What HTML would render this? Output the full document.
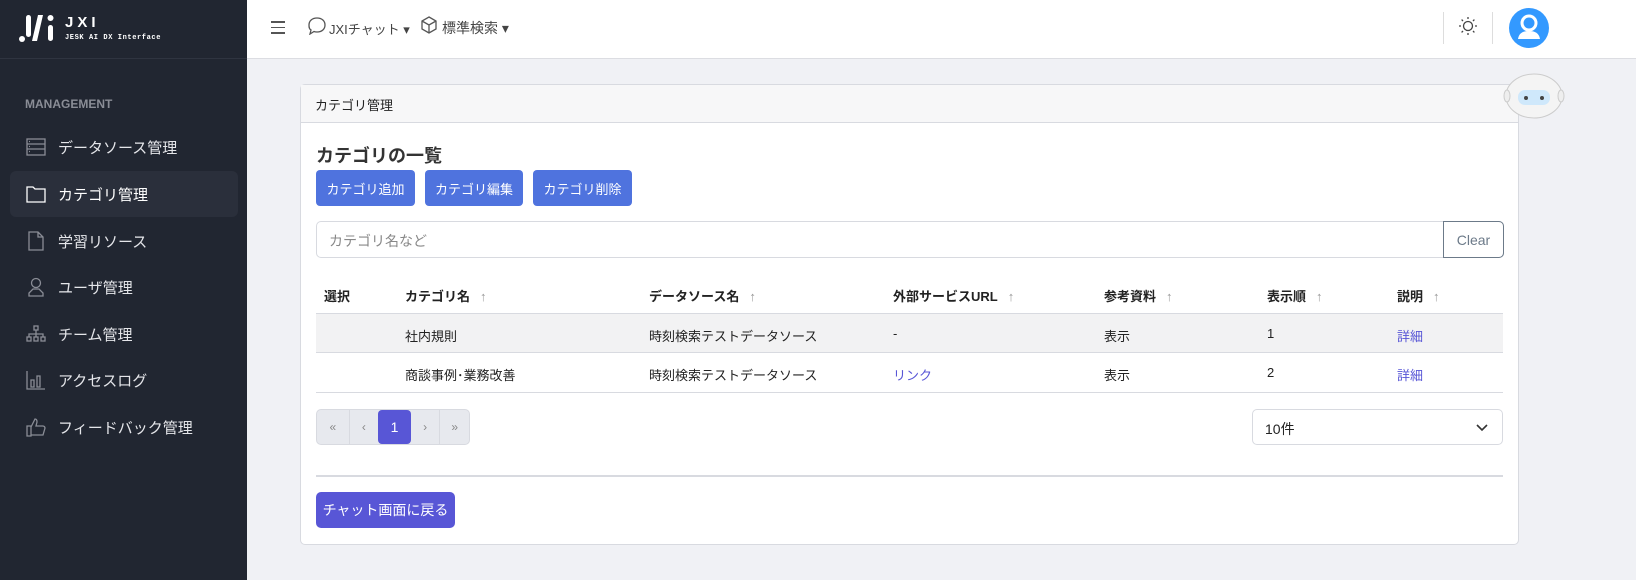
<!DOCTYPE html><html><head><meta charset="utf-8"><style>
*{box-sizing:border-box;margin:0;padding:0}
body{width:1636px;height:580px;overflow:hidden;background:#f0f1f5;font-family:"Liberation Sans","Noto Sans CJK JP",sans-serif;font-size:14px;color:#222;position:relative}
.sb{position:absolute;left:0;top:0;width:247px;height:580px;background:#212631;color:#e5e6ea}
.logo{height:59px;border-bottom:1px solid #2f3440;position:relative}
.nav{position:absolute;left:10px;width:228px;height:46px;display:flex;align-items:center;padding-left:16px;font-size:15px}
.nav svg{margin-right:12px}
.hd{position:absolute;left:247px;top:0;right:0;height:59px;background:#fff;border-bottom:1px solid #dcdde2}
.card{position:absolute;left:300px;top:84px;width:1219px;height:461px;background:#fff;border:1px solid #d8dae0;border-radius:5px}
.ch{height:38px;background:#f7f7f8;border-bottom:1px solid #d8dae0;padding:10px 14px;font-size:13px}
.abs{position:absolute}
.btn{position:absolute;top:170px;height:36px;background:#4f73de;color:#fff;border-radius:4px;font-size:13px;display:flex;align-items:center;justify-content:center}
.th{position:absolute;top:286px;font-weight:bold;font-size:13px}
.th i{font-style:normal;font-weight:normal;color:#999;margin-left:10px}
.td{position:absolute;font-size:13px}
a{color:#5856d6}
</style></head><body>
<div class="sb">
<div class="logo">
<svg class="abs" style="left:18px;top:13px" width="42" height="30" viewBox="0 0 42 30"><g fill="#fff"><rect x="8" y="2" width="5" height="22" rx="2.5"/><circle cx="4" cy="26" r="3"/><path d="M20 2 l5 0 l-6 26 l-5 0z"/><rect x="30" y="12" width="5" height="16" rx="2.5"/><circle cx="32.5" cy="5" r="3"/></g></svg>
<div class="abs" style="left:65px;top:14px;font-size:15px;font-weight:bold;letter-spacing:4px;color:#fff">JXI</div>
<div class="abs" style="left:65px;top:34px;font-size:7px;font-weight:bold;letter-spacing:.6px;color:#fff;font-family:'Liberation Mono',monospace">JESK AI DX Interface</div>
</div>
<div class="abs" style="left:25px;top:97px;font-size:12px;font-weight:bold;color:#8a8d96">MANAGEMENT</div>
<div class="nav" style="top:124px"><svg width="20" height="18" viewBox="0 0 20 18" fill="none" stroke="#8a8d96" stroke-width="1.3"><rect x="1" y="1" width="18" height="16"/><path d="M1 6h18M1 11h18M3 3.5h1M3 8.5h1M3 13.5h1"/></svg>データソース管理</div>
<div class="nav" style="top:171px;background:#2a2f3b;border-radius:6px;color:#fff"><svg width="20" height="18" viewBox="0 0 20 18" fill="none" stroke="#fff" stroke-width="1.3"><path d="M1 2h6l2 2h10v13H1z"/></svg>カテゴリ管理</div>
<div class="nav" style="top:218px"><svg width="20" height="20" viewBox="0 0 20 20" fill="none" stroke="#8a8d96" stroke-width="1.3"><path d="M3 1h9l5 5v13H3zM12 1v5h5"/></svg>学習リソース</div>
<div class="nav" style="top:264px"><svg width="20" height="20" viewBox="0 0 20 20" fill="none" stroke="#8a8d96" stroke-width="1.3"><circle cx="10" cy="6" r="4.5"/><path d="M3 19v-3l4-4h6l4 4v3z"/></svg>ユーザ管理</div>
<div class="nav" style="top:311px"><svg width="20" height="18" viewBox="0 0 20 18" fill="none" stroke="#8a8d96" stroke-width="1.3"><rect x="8" y="1" width="4" height="4"/><rect x="1" y="12" width="4" height="4"/><rect x="8" y="12" width="4" height="4"/><rect x="15" y="12" width="4" height="4"/><path d="M10 5v7M3 12V9h14v3"/></svg>チーム管理</div>
<div class="nav" style="top:357px"><svg width="20" height="20" viewBox="0 0 20 20" fill="none" stroke="#8a8d96" stroke-width="1.3"><path d="M1 1v18h18M5 10h3v7H5zM11 6h3v11h-3z"/></svg>アクセスログ</div>
<div class="nav" style="top:404px"><svg width="20" height="20" viewBox="0 0 20 20" fill="none" stroke="#8a8d96" stroke-width="1.3"><path d="M1 9h4v10H1zM5 10l4-8c2 0 2 2 2 3l-1 4h7c1 0 2 1 2 2l-2 7H5"/></svg>フィードバック管理</div>
</div>
<div class="hd">
<div class="abs" style="left:24px;top:21px;width:14px"><div style="height:1.5px;background:#555;margin-bottom:4px"></div><div style="height:1.5px;background:#555;margin-bottom:4px"></div><div style="height:1.5px;background:#555"></div></div>
<svg class="abs" style="left:60px;top:17px" width="20" height="18" viewBox="0 0 20 18" fill="none" stroke="#555" stroke-width="1.3"><path d="M10 1c5 0 8 3 8 7s-3 7-8 7c-1 0-2 0-3-.5L3 17l1-4C2 12 2 10 2 8c0-4 3-7 8-7z"/></svg>
<div class="abs" style="left:82px;top:19px;color:#444;font-size:13px">JXIチャット ▾</div>
<svg class="abs" style="left:173px;top:16px" width="18" height="18" viewBox="0 0 18 18" fill="none" stroke="#555" stroke-width="1.3"><path d="M9 1l7 4v8l-7 4-7-4V5zM2 5l7 4 7-4M9 9v8"/></svg>
<div class="abs" style="left:195px;top:18px;color:#444;font-size:14px">標準検索 ▾</div>
<div class="abs" style="left:1196px;top:12px;width:1px;height:32px;background:#ddd"></div>
<svg class="abs" style="left:1211px;top:16px" width="20" height="20" viewBox="0 0 20 20" fill="none" stroke="#444" stroke-width="1.3"><circle cx="10" cy="10" r="4.5"/><path d="M10 1v2M10 17v2M1 10h2M17 10h2M3.6 3.6l1.4 1.4M15 15l1.4 1.4M3.6 16.4L5 15M15 5l1.4-1.4"/></svg>
<div class="abs" style="left:1245px;top:12px;width:1px;height:32px;background:#ddd"></div>
<svg class="abs" style="left:1262px;top:8px" width="40" height="40" viewBox="0 0 40 40"><circle cx="20" cy="20" r="20" fill="#3399ff"/><circle cx="20" cy="15" r="7" fill="none" stroke="#fff" stroke-width="3"/><path d="M9 31c1-6 5-8 11-8s10 2 11 8z" fill="#fff"/></svg>
</div>
<div class="card"><div class="ch">カテゴリ管理</div></div>
<svg class="abs" style="left:1503px;top:72px" width="62" height="48" viewBox="0 0 62 48"><ellipse cx="31" cy="24" rx="28" ry="22" fill="#f4f4f4" stroke="#ccc"/><ellipse cx="4" cy="24" rx="3" ry="6" fill="#eee" stroke="#ccc"/><ellipse cx="58" cy="24" rx="3" ry="6" fill="#eee" stroke="#ccc"/><rect x="15" y="18" width="32" height="15" rx="7" fill="#cfe8fb"/><circle cx="23" cy="26" r="2" fill="#444"/><circle cx="39" cy="26" r="2" fill="#444"/></svg>
<div class="abs" style="left:316px;top:142px;font-size:18px;font-weight:bold;color:#333">カテゴリの一覧</div>
<div class="btn" style="left:316px;width:99px">カテゴリ追加</div>
<div class="btn" style="left:425px;width:98px">カテゴリ編集</div>
<div class="btn" style="left:533px;width:99px">カテゴリ削除</div>
<div class="abs" style="left:316px;top:221px;width:1188px;height:37px;border:1px solid #d8dae0;border-radius:5px;padding:9px 12px;color:#888">カテゴリ名など</div>
<div class="abs" style="left:1443px;top:221px;width:61px;height:37px;border:1px solid #6c7a89;border-radius:0 5px 5px 0;color:#6c7a89;text-align:center;padding-top:10px">Clear</div>
<div class="th" style="left:324px">選択</div>
<div class="th" style="left:405px">カテゴリ名<i>↑</i></div>
<div class="th" style="left:649px">データソース名<i>↑</i></div>
<div class="th" style="left:893px">外部サービスURL<i>↑</i></div>
<div class="th" style="left:1104px">参考資料<i>↑</i></div>
<div class="th" style="left:1267px">表示順<i>↑</i></div>
<div class="th" style="left:1397px">説明<i>↑</i></div>
<div class="abs" style="left:316px;top:313px;width:1187px;height:40px;background:#f2f2f3;border-top:1px solid #d8dae0;border-bottom:1px solid #d8dae0"></div>
<div class="abs" style="left:316px;top:392px;width:1187px;height:1px;background:#d8dae0"></div>
<div class="td" style="left:405px;top:326px">社内規則</div><div class="td" style="left:649px;top:326px">時刻検索テストデータソース</div><div class="td" style="left:893px;top:326px">-</div><div class="td" style="left:1104px;top:326px">表示</div><div class="td" style="left:1267px;top:326px">1</div><div class="td" style="left:1397px;top:326px"><a>詳細</a></div>
<div class="td" style="left:405px;top:365px">商談事例･業務改善</div><div class="td" style="left:649px;top:365px">時刻検索テストデータソース</div><div class="td" style="left:893px;top:365px"><a>リンク</a></div><div class="td" style="left:1104px;top:365px">表示</div><div class="td" style="left:1267px;top:365px">2</div><div class="td" style="left:1397px;top:365px"><a>詳細</a></div>
<div class="abs" style="left:316px;top:409px;width:154px;height:36px;background:#e7e9ee;border:1px solid #d8dae0;border-radius:5px;display:flex;color:#888;font-size:12px;line-height:34px;text-align:center">
<div style="width:33px;border-right:1px solid #d8dae0">«</div><div style="width:29px">‹</div><div style="width:33px;background:#5856d6;color:#fff;border-radius:4px;font-size:14px">1</div><div style="width:30px;border-right:1px solid #d8dae0">›</div><div style="width:29px">»</div></div>
<div class="abs" style="left:1252px;top:409px;width:251px;height:36px;border:1px solid #d8dae0;border-radius:5px;padding:9px 12px">10件<svg style="position:absolute;right:14px;top:14px" width="12" height="8" viewBox="0 0 12 8" fill="none" stroke="#333" stroke-width="1.6"><path d="M1 1l5 5 5-5"/></svg></div>
<div class="abs" style="left:316px;top:475px;width:1187px;height:2px;background:#d8dae0"></div>
<div class="abs" style="left:316px;top:492px;width:139px;height:36px;background:#5856d6;color:#fff;border-radius:5px;text-align:center;line-height:36px;font-size:14px">チャット画面に戻る</div>
</body></html>
